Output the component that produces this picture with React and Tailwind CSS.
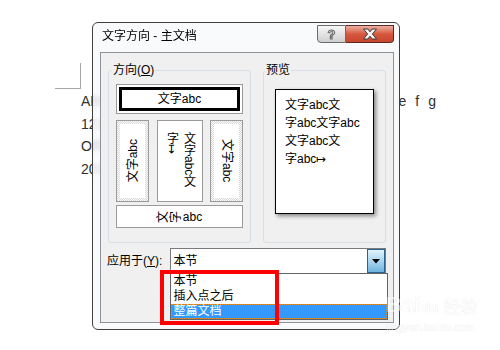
export default function App() {
  return (
    <div className="relative w-[500px] h-[350px] overflow-hidden bg-white font-['Liberation_Sans','Noto_Sans_CJK_SC',sans-serif] text-black">
      {/* background document */}
      <div className="pt-[63px] pl-[55px]">
        <div className="w-[26px] h-[26px] border-r border-b border-[#a6a6a6]" />
      </div>
      <div className="pl-[81px] pt-[1px] text-[14px] leading-[22.5px] text-[#303030]">
        <div className="flex w-[355px] justify-between">
          <span>ABCDEFG</span>
          <span className="flex gap-[9px]">
            <span>e</span>
            <span>f</span>
            <span>g</span>
          </span>
        </div>
        <div>1234567890</div>
        <div>Office Word</div>
        <div>2010</div>
      </div>

      {/* dialog window */}
      <div className="absolute left-[92px] top-[22px] w-[308px] h-[308px] rounded-[6px] border border-[#3f3f3f] bg-[#f8f9fa]/80 backdrop-blur-[2px] flex flex-col">
        {/* title bar */}
        <div className="h-[29px] flex items-start shrink-0">
          <div className="pl-[9px] pt-[5px] text-[12px] leading-[16px]">文字方向 - 主文档</div>
          <div className="ml-auto mr-[5px] mt-[2px] flex h-[18px]">
            <div className="w-[29px] h-full border border-[#6b6b6b] rounded-bl-[4px] bg-gradient-to-b from-[#f7f7f7] via-[#e4e4e4] to-[#cfcfcf] flex items-center justify-center text-[13px] leading-none font-bold text-[#eeeeee] [-webkit-text-stroke:1px_#6a6a6a]">
              ?
            </div>
            <div className="w-[48px] h-full border border-l-0 border-[#5a2a20] rounded-br-[4px] bg-gradient-to-b from-[#eab0a2] via-[#d5583f] to-[#c9452d] flex items-center justify-center">
              <svg width="18" height="12" viewBox="0 0 18 12">
                <path
                  d="M2.5 1 L6.8 1 L9 3.8 L11.2 1 L15.5 1 L11.4 6 L15.5 11 L11.2 11 L9 8.2 L6.8 11 L2.5 11 L6.6 6 Z"
                  fill="#f4f4f4"
                  stroke="#3a3a3a"
                  strokeWidth="1"
                  strokeLinejoin="round"
                />
              </svg>
            </div>
          </div>
        </div>

        {/* content panel */}
        <div className="ml-[7px] w-[294px] h-[271px] shrink-0 border border-[#8e9399] bg-[#f0f0f0] px-[7px] pt-[17px] text-[12px]">
          <div className="flex gap-[12px] h-[173px]">
            {/* direction group */}
            <div className="w-[143px] h-full border border-[#d5dfe5] rounded-[3px] flex flex-col px-[7px]">
              <div className="-mt-[8px] -ml-[4px] self-start px-[1px] bg-[#f0f0f0] leading-[14px]">
                方向(<u>O</u>)
              </div>
              <div className="mt-[7px] h-[30px] border border-[#9a9a9a] p-[2px] bg-white">
                <div className="h-full border-[3px] border-black bg-white flex items-center justify-center leading-none">
                  文字abc
                </div>
              </div>
              <div className="mt-[6px] h-[82px] flex justify-between">
                <div className="w-[33px] h-full border border-[#9a9a9a] p-[3px] bg-[repeating-conic-gradient(#d6d6d6_0%_25%,#ffffff_0%_50%)] bg-[length:2px_2px]">
                  <div className="h-full bg-white flex items-center justify-center">
                    <span className="[writing-mode:vertical-rl] [text-orientation:sideways] rotate-180 leading-[14px]">文字abc</span>
                  </div>
                </div>
                <div className="w-[46px] h-full border border-[#9a9a9a] bg-white flex justify-center pt-[11px]">
                  <div className="[writing-mode:vertical-rl] leading-[17px]">
                    文字abc文
                    <br />
                    字↦
                  </div>
                </div>
                <div className="w-[33px] h-full border border-[#9a9a9a] p-[3px] bg-[repeating-conic-gradient(#d6d6d6_0%_25%,#ffffff_0%_50%)] bg-[length:2px_2px]">
                  <div className="h-full bg-white flex items-center justify-center">
                    <span className="[writing-mode:vertical-rl] [text-orientation:sideways] leading-[14px]">文字abc</span>
                  </div>
                </div>
              </div>
              <div className="mt-[3px] h-[23px] border border-[#9a9a9a] bg-white flex items-center justify-center gap-[1px] leading-[12px]">
                <span className="inline-block w-[12px] h-[12px] text-center -rotate-90">文</span>
                <span className="inline-block w-[12px] h-[12px] text-center -rotate-90">字</span>
                <span className="leading-[12px]">abc</span>
              </div>
            </div>

            {/* preview group */}
            <div className="w-[123px] h-full border border-[#d5dfe5] rounded-[3px] flex flex-col px-[7px]">
              <div className="-mt-[8px] -ml-[6px] self-start px-[1px] bg-[#f0f0f0] leading-[14px]">预览</div>
              <div className="mt-[12px] ml-[4px] w-[99px] h-[125px] border border-black bg-white shadow-[2px_2px_4px_rgba(0,0,0,0.45)] pl-[9px] pt-[6px] leading-[18px] whitespace-nowrap">
                <div>文字abc文</div>
                <div>字abc文字abc</div>
                <div>文字abc文</div>
                <div>字abc↦</div>
              </div>
            </div>
          </div>

          {/* apply to row */}
          <div className="mt-[5px] flex items-center">
            <div className="w-[62px] leading-[14px] -ml-[1px]">
              应用于(<u>Y</u>):
            </div>
            <div className="relative ml-[1px] w-[218px] h-[26px] border border-[#7a7a7a] bg-white flex items-center">
              <span className="pl-[3px] leading-[14px]">本节</span>
              <div className="ml-auto w-[18px] h-full border border-[#2c628b] bg-gradient-to-b from-[#e3f3fc] via-[#a9d6f0] to-[#6fb2dc] flex items-center justify-center">
                <svg width="8" height="5" viewBox="0 0 8 5">
                  <path d="M0 0 L8 0 L4 4.5 Z" fill="#000" />
                </svg>
              </div>
              <div className="absolute left-[-1px] top-[24px] w-[218px] border border-[#646464] bg-white leading-[15px] z-10">
                <div className="h-[15px] pl-[3px]">本节</div>
                <div className="h-[15px] pl-[3px]">插入点之后</div>
                <div className="h-[15px] pl-[3px] bg-[#3399ff] text-white outline-1 outline-dotted outline-[#e0902f] -outline-offset-1">整篇文档</div>
              </div>
            </div>
          </div>
        </div>
      </div>

      {/* red annotation box */}
      <div className="absolute left-[160px] top-[270px] w-[119px] h-[55px] border-4 border-[#ff0000] z-20" />

      {/* watermark */}
      <div className="absolute left-[386px] top-[294px] z-30 text-white [text-shadow:0_0_1px_#b0b0b0] opacity-50 leading-none">
        <div className="flex items-end gap-[2px]">
          <span className="text-[22px] font-bold">Bai</span>
          <span className="text-[13px] font-bold mb-[2px]">du</span>
          <span className="text-[17px] ml-[3px]">经验</span>
        </div>
        <div className="mt-[6px] text-[11px]">jingyan.baidu.com</div>
      </div>
    </div>
  );
}
